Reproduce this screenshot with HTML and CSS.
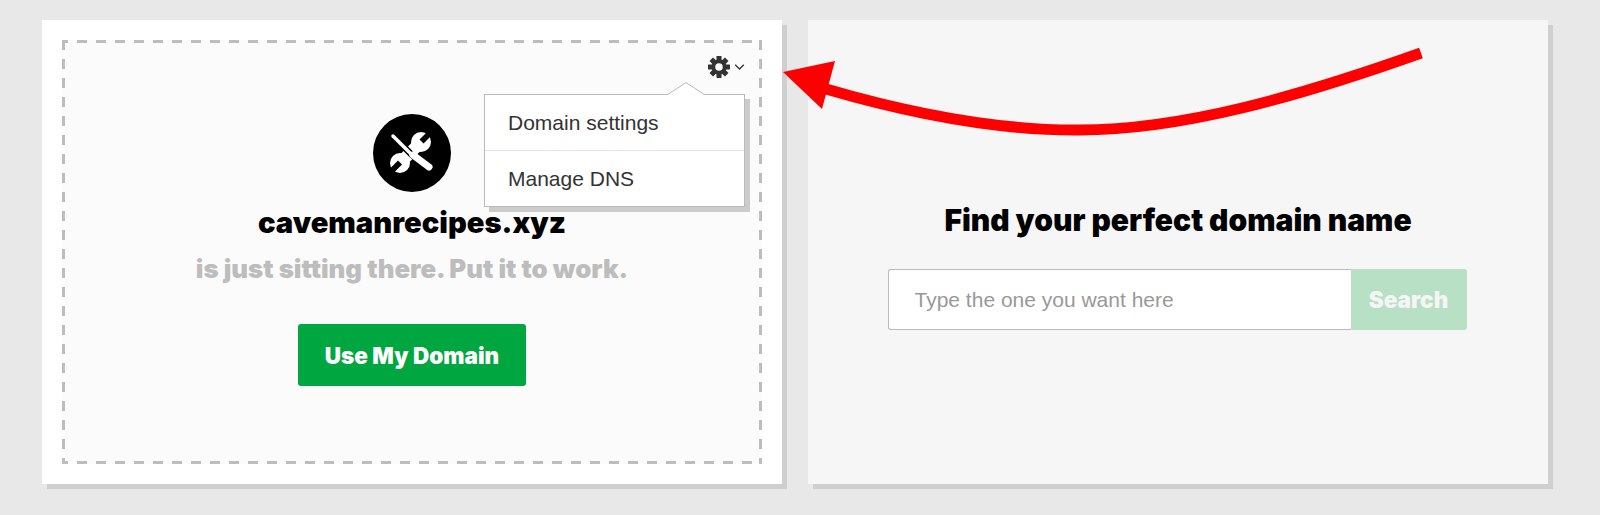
FILE: index.html
```html
<!DOCTYPE html>
<html lang="en">
<head>
<meta charset="utf-8">
<title>Domain</title>
<link rel="stylesheet" href="styles.css">
</head>
<body>
<main class="page">
  <section class="card">
    <div class="dashed">
      <div class="settings">
        <svg class="gear" viewBox="0 0 20 20" aria-hidden="true">
          <g fill="#333">
            <rect x="7.7" y="0" width="4.6" height="4.5" rx=".4"/>
            <rect x="7.7" y="0" width="4.6" height="4.5" rx=".4" transform="rotate(45 10 10)"/>
            <rect x="7.7" y="0" width="4.6" height="4.5" rx=".4" transform="rotate(90 10 10)"/>
            <rect x="7.7" y="0" width="4.6" height="4.5" rx=".4" transform="rotate(135 10 10)"/>
            <rect x="7.7" y="0" width="4.6" height="4.5" rx=".4" transform="rotate(180 10 10)"/>
            <rect x="7.7" y="0" width="4.6" height="4.5" rx=".4" transform="rotate(225 10 10)"/>
            <rect x="7.7" y="0" width="4.6" height="4.5" rx=".4" transform="rotate(270 10 10)"/>
            <rect x="7.7" y="0" width="4.6" height="4.5" rx=".4" transform="rotate(315 10 10)"/>
          </g>
          <circle cx="10" cy="10" r="5.1" fill="none" stroke="#333" stroke-width="3.4"/>
        </svg>
        <svg class="chevron" viewBox="0 0 10 6" aria-hidden="true"><path d="M.7.7 5 5 9.3.7" fill="none" stroke="#333" stroke-width="1.3"/></svg>
      </div>
      <div class="menu">
        <svg class="caret" viewBox="0 0 38 13" aria-hidden="true"><path d="M0 13 19 .6 38 13" fill="#fff" stroke="#bbb" stroke-width="1"/></svg>
        <div class="menu-item">Domain settings</div>
        <div class="menu-item menu-item-last">Manage DNS</div>
      </div>
      <div class="tools">
        <svg viewBox="0 0 54 54" width="54" height="54" aria-hidden="true">
          <g fill="#fff">
            <circle cx="36" cy="16" r="10"/>
            <circle cx="15" cy="37" r="10"/>
            <path d="M30.5 13 39 21.5 20.5 40 12 31.5Z"/>
          </g>
          <path d="M38.5 17.5 34.5 13.5 43 5 47 9Z M17 38.5 13 34.5 4.6 43 8.6 47Z" fill="#000"/>
          <path d="M8 10 27 29 44 41" fill="none" stroke="#000" stroke-width="6.5"/>
          <path d="M8 10 27 29" fill="none" stroke="#fff" stroke-width="3.5" stroke-linecap="round"/>
          <path d="M28 29 44 41" fill="none" stroke="#fff" stroke-width="7" stroke-linecap="round"/>
        </svg>
      </div>
      <h2 class="domain">cavemanrecipes.xyz</h2>
      <p class="tagline">is just sitting there. Put it to work.</p>
      <button class="use-btn" type="button">Use My Domain</button>
    </div>
  </section>
  <section class="panel">
    <h2 class="find">Find your perfect domain name</h2>
    <form class="search">
      <input class="search-input" type="text" placeholder="Type the one you want here">
      <button class="search-btn" type="button">Search</button>
    </form>
  </section>
</main>
<svg class="arrow" viewBox="0 0 1600 515" aria-hidden="true">
  <path d="M1421 53C1300 96 1180 131 1075 130 990 130 905 112 826 89" fill="none" stroke="#f00" stroke-width="11"/>
  <path d="M783 72 835 61 822 109Z" fill="#f00"/>
</svg>
</body>
</html>
```

FILE: styles.css
```css
* { box-sizing: border-box; }
html, body { margin: 0; height: 515px; overflow: hidden; }
body { background: #e8e8e8; font-family: "Liberation Sans", Arial, sans-serif; position: relative; }
.page { display: grid; grid-template-columns: 740px 740px; gap: 26px; padding: 20px 0 0 42px; }
.card, .panel { height: 464px; box-shadow: 5px 5px 0 #cfcfcf; }
.card { background: #fff; padding: 20px; }
.panel { background: #f6f6f6; display: flex; flex-direction: column; align-items: center; padding-top: 182px; }
.dashed {
  position: relative; height: 424px; padding-top: 74px;
  display: flex; flex-direction: column; align-items: center;
  background:
    linear-gradient(90deg, #bdbdbd 10px, transparent 10px) -4px 0 / 19px 3px repeat-x,
    linear-gradient(90deg, #bdbdbd 10px, transparent 10px) -4px 100% / 19px 3px repeat-x,
    linear-gradient(#bdbdbd 10px, transparent 10px) 0 0 / 3px 19px repeat-y,
    linear-gradient(#bdbdbd 10px, transparent 10px) 100% 0 / 3px 19px repeat-y,
    #fbfbfb;
}
.settings { position: absolute; top: 16px; right: 17px; display: flex; align-items: center; gap: 4px; }
.gear { width: 22px; height: 22px; display: block; }
.chevron { width: 11px; height: 6px; display: block; }
.menu { position: absolute; top: 54px; right: 17px; width: 261px; background: #fff; border: 1px solid #bbb; box-shadow: 5px 5px 0 #ccc; color: #333; font-size: 21px; z-index: 2; }
.caret { position: absolute; width: 38px; height: 13px; top: -13px; left: 182px; display: block; }
.menu-item { height: 56px; padding: 1px 23px 0; display: flex; align-items: center; border-bottom: 1px solid #e6e6e6; }
.menu-item-last { height: 55px; border-bottom: 0; }
.tools { width: 78px; height: 78px; border-radius: 50%; background: #000; display: flex; align-items: center; justify-content: center; }
.domain { margin: 13px 0 0; font: 900 29.2px/36px Inter, sans-serif; color: #000; }
.tagline { margin: 11px 0 0; font: 900 25.8px/34px Inter, sans-serif; color: #bdbdbd; }
.use-btn { margin-top: 38px; width: 228px; height: 62px; border: 0; border-radius: 3px; background: #00a63f; color: #fff; font: 900 22.5px Inter, sans-serif; }
.find { margin: 0; font: 900 30px/36px Inter, sans-serif; color: #000; }
.search { display: flex; margin: 31px 2px 0 0; width: 579px; }
.search-input { flex: 1; height: 61px; border: 1px solid #bbb; border-right: 0; border-radius: 3px 0 0 3px; padding: 0 26px; font: 21px "Liberation Sans", sans-serif; background: #fff; outline: 0; }
.search-input::placeholder { color: #999; opacity: 1; }
.search-btn { width: 116px; height: 61px; border: 0; border-radius: 0 3px 3px 0; background: #b8e0c4; color: #f5f5f5; font: 900 22.5px Inter, sans-serif; }
.arrow { position: absolute; inset: 0; width: 1600px; height: 515px; pointer-events: none; z-index: 3; }
```
